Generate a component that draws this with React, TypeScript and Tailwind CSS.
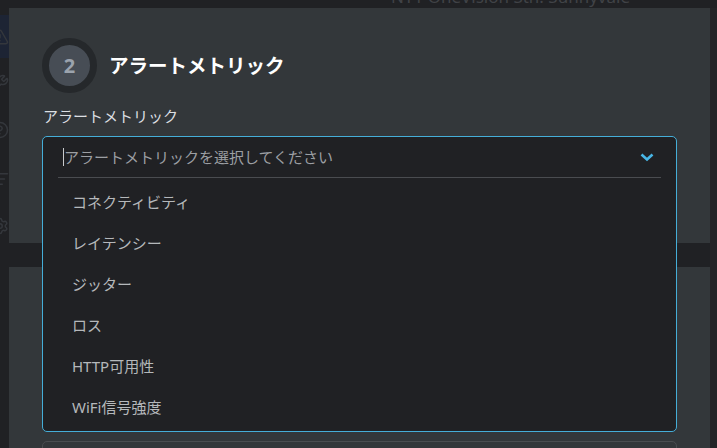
import React from "react";
import { TriangleAlert, Wrench, CircleHelp, ListFilter, Settings } from "lucide-react";

const options = ["コネクティビティ", "レイテンシー", "ジッター", "ロス", "HTTP可用性", "WiFi信号強度"];

export default function App() {
  return (
    <div className="w-[717px] h-[448px] overflow-hidden bg-[#202124] flex flex-col font-['Noto_Sans','Noto_Sans_CJK_JP',sans-serif]">
      <div className="h-[8px] relative overflow-hidden shrink-0">
        <span className="absolute left-[391px] top-[-13px] text-[17px] leading-[20px] text-[#404347] whitespace-nowrap">
          NY1 OneVision Sth. Sunnyvale
        </span>
      </div>
      <div className="flex flex-1 min-h-0">
        <div className="w-[9px] shrink-0 overflow-hidden flex flex-col text-[#34373c]">
          <div className="mt-[7px] h-[43px] bg-[#1d2434] flex items-center">
            <TriangleAlert size={18} className="-ml-[9px] shrink-0" />
          </div>
          <div className="mt-[16px] h-[18px] flex items-center">
            <Wrench size={18} className="-ml-[9px] shrink-0" />
          </div>
          <div className="mt-[29px] h-[18px] flex items-center">
            <CircleHelp size={18} className="-ml-[9px] shrink-0" />
          </div>
          <div className="mt-[31px] h-[18px] flex items-center">
            <ListFilter size={18} className="-ml-[9px] shrink-0" />
          </div>
          <div className="mt-[29px] h-[18px] flex items-center">
            <Settings size={18} className="-ml-[9px] shrink-0" />
          </div>
        </div>
        <div className="w-[701px] shrink-0 flex flex-col gap-[24px]">
          <div className="h-[235px] shrink-0 bg-[#33373a] px-[33px] pt-[30px] relative z-10">
            <div className="flex items-center gap-[12px]">
              <div className="w-[55px] h-[55px] rounded-full border-[7px] border-[#25282b] bg-[#474d55] flex items-center justify-center">
                <span className="text-[20px] font-bold text-[#9ba3ad] leading-none">2</span>
              </div>
              <div className="text-[19.5px] font-bold text-white leading-[28px]">アラートメトリック</div>
            </div>
            <div className="mt-[13px] pl-[1px] text-[15px] leading-[20px] text-[#dcdfe2]">アラートメトリック</div>
            <div className="mt-[10px] relative h-[42px]">
              <div className="absolute left-0 right-0 top-0 border border-[#45aed8] rounded-[5px] bg-[#202124]">
                <div className="h-[40px] flex items-center pl-[20px] pr-[22px]">
                  <span className="w-[1px] h-[18px] bg-[#c8cacc]" />
                  <span className="flex-1 text-[15px] text-[#9c9fa3] leading-[20px]">アラートメトリックを選択してください</span>
                  <svg width="14" height="9" viewBox="0 0 14 9" fill="none">
                    <path d="M1.5 1.5L7 6.5L12.5 1.5" stroke="#48b6e6" strokeWidth="2.6" />
                  </svg>
                </div>
                <div className="mx-[15px] h-[1px] bg-[#4a4c50]" />
                <div className="pt-[4px] pb-[3px]">
                  {options.map((o) => (
                    <div key={o} className="h-[41px] flex items-center pl-[29px] text-[15px] text-[#b5b8bb]">
                      {o}
                    </div>
                  ))}
                </div>
              </div>
            </div>
          </div>
          <div className="flex-1 bg-[#33373a] px-[33px] pt-[174px]">
            <div className="h-[40px] border border-[#4a4d50] rounded-[5px]" />
          </div>
        </div>
        <div className="w-[7px] shrink-0 bg-[#232427]" />
      </div>
    </div>
  );
}
